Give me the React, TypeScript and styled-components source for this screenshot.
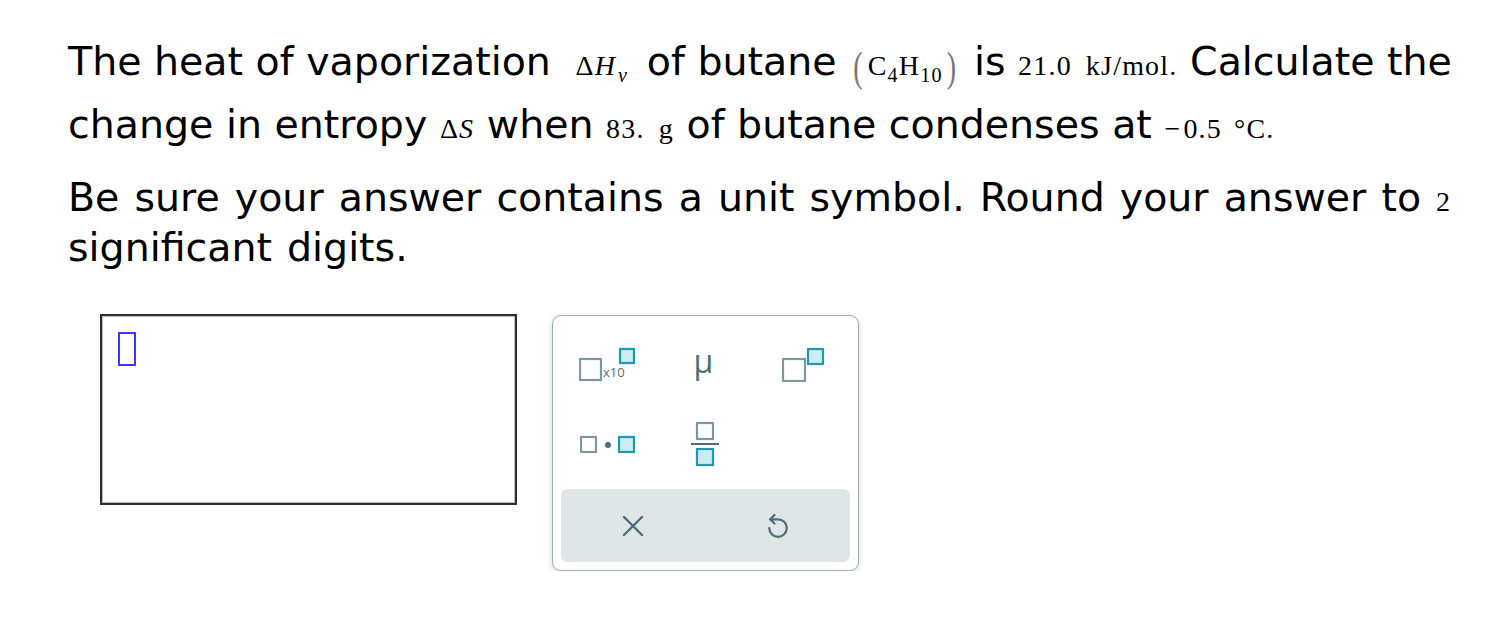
import * as React from 'react';
import styled, { createGlobalStyle } from 'styled-components';

const GlobalStyle = createGlobalStyle`
  html, body {
    margin: 0;
    padding: 0;
    background: #ffffff;
  }
`;

const Page = styled.div`
  padding: 30px 0 0 68px;
  width: 1410px;
  font-family: "DejaVu Sans", Verdana, sans-serif;
  font-size: 39.5px;
  color: #000;
`;

const Paragraph = styled.p<{ $lh: number; $mb: number; $ws?: number }>`
  margin: 0 0 ${p => p.$mb}px 0;
  line-height: ${p => p.$lh}px;
  word-spacing: ${p => p.$ws || 0}px;
`;

const M = styled.span<{ $pad?: number; $padR?: number }>`
  font-family: "Liberation Serif", "Times New Roman", serif;
  font-size: 28px;
  letter-spacing: 1.2px;
  word-spacing: 0;
  line-height: 0;
  padding-left: ${p => p.$pad || 0}px;
  padding-right: ${p => p.$padR || 0}px;
`;

const I = styled.i`
  font-style: italic;
`;

const Sub = styled.sub<{ $ml?: number }>`
  font-size: 0.72em;
  vertical-align: -0.35em;
  line-height: 0;
  margin-left: ${p => p.$ml || 0}px;
`;

const Gap = styled.span<{ $w: number }>`
  display: inline-block;
  width: ${p => p.$w}px;
`;

const Paren = styled.span`
  display: inline-block;
  color: #777;
  transform: scaleY(1.5) translateY(1px);
  line-height: 0;
  margin: 0 4px;
`;

const Work = styled.div`
  display: flex;
  align-items: flex-start;
  gap: 35px;
  margin: 42px 0 0 32px;
`;

const AnswerBox = styled.div`
  width: 397px;
  height: 171px;
  border: 2px solid #2e2e2e;
  box-shadow: inset 0 0 0 1px #bdbdbd;
  padding: 16px 0 0 16px;
`;

const Cursor = styled.div`
  width: 14px;
  height: 30px;
  border: 2px solid #3a3aff;
`;

const Keypad = styled.div`
  margin-top: 1px;
  width: 289px;
  border: 1.5px solid #9bb0b6;
  border-radius: 9px;
  padding: 8px;
  box-shadow: 0 2px 6px rgba(80, 110, 120, 0.25);
  background: #fff;
`;

const KeyGrid = styled.div`
  display: grid;
  grid-template-columns: repeat(3, 1fr);
  grid-auto-rows: 80px;
  margin-bottom: 5px;
`;

const Key = styled.div`
  display: flex;
  align-items: center;
  justify-content: center;
  color: #4e6d78;
`;

const ActionBar = styled.div`
  display: grid;
  grid-template-columns: 1fr 1fr;
  height: 73px;
  background: #dfe6e8;
  border-radius: 7px;
`;

const Mu = styled.span`
  font-family: "Open Sans", "DejaVu Sans", sans-serif;
  font-size: 32px;
  line-height: 1;
  color: #4e6d78;
  margin: 0 4px 6px 0;
`;

const GRAY = '#7f979e';
const CYAN = '#1a9bb1';
const CYAN_FILL = '#cbecf1';

function Box({ x, y, s, on }: { x: number; y: number; s: number; on?: boolean }) {
  return (
    <rect
      x={x + 1}
      y={y + 1}
      width={s - 2}
      height={s - 2}
      fill={on ? CYAN_FILL : '#fff'}
      stroke={on ? CYAN : GRAY}
      strokeWidth={2.2}
    />
  );
}

function SciIcon() {
  return (
    <svg width="60" height="36" viewBox="0 0 60 36">
      <Box x={0} y={12} s={23} />
      <text x={24} y={31} fontSize="13" fontFamily="Open Sans, DejaVu Sans, sans-serif" fill="#4e6d78">x10</text>
      <Box x={40} y={2} s={16} on />
    </svg>
  );
}

function PowIcon() {
  return (
    <svg width="46" height="36" viewBox="0 0 46 36">
      <Box x={3} y={12} s={24} />
      <Box x={28} y={2} s={17} on />
    </svg>
  );
}

function DotIcon() {
  return (
    <svg width="58" height="20" viewBox="0 0 58 20">
      <Box x={0} y={2} s={17} />
      <circle cx={28} cy={11} r={3} fill="#4e6d78" />
      <Box x={38} y={2} s={17} on />
    </svg>
  );
}

function FracIcon() {
  return (
    <svg width="30" height="48" viewBox="0 0 30 48">
      <Box x={6} y={2} s={18} />
      <rect x={1} y={23} width={28} height={2} fill="#4e6d78" />
      <Box x={6} y={28} s={18} on />
    </svg>
  );
}

function ClearIcon() {
  return (
    <svg width="22" height="22" viewBox="0 0 22 22">
      <path d="M2 2 L20 20 M20 2 L2 20" stroke="#4e6d78" strokeWidth="2.4" strokeLinecap="round" />
    </svg>
  );
}

function UndoIcon() {
  return (
    <svg width="30" height="30" viewBox="0 0 24 24" fill="none">
      <path d="M9.2 3.2 L5.8 6.6 L9.2 10" stroke="#4e6d78" strokeWidth="1.8" strokeLinecap="round" strokeLinejoin="round" />
      <path d="M5.8 6.6 H12 A7 7 0 1 1 5 13.6" stroke="#4e6d78" strokeWidth="1.8" strokeLinecap="round" />
    </svg>
  );
}

export default function App() {
  return (
    <>
      <GlobalStyle />
      <Page>
        <Paragraph $lh={63} $mb={16}>
          The heat of vaporization{' '}
          <M $pad={12} $padR={6}>Δ<I>H</I><Sub $ml={2}><I>v</I></Sub></M>{' '}
          of butane{' '}
          <M><Paren>(</Paren>C<Sub>4</Sub>H<Sub>10</Sub><Paren>)</Paren></M>{' '}
          is <M>21.0<Gap $w={14} />kJ/mol.</M> Calculate the change in entropy{' '}
          <M>Δ<I>S</I></M> when <M>83.<Gap $w={14} />g</M> of butane condenses at{' '}
          <M>−<Gap $w={2} />0.5<Gap $w={12} />°C.</M>
        </Paragraph>
        <Paragraph $lh={50} $mb={0} $ws={2.5}>
          Be sure your answer contains a unit symbol. Round your answer to{' '}
          <M>2</M> significant digits.
        </Paragraph>
        <Work>
          <AnswerBox>
            <Cursor />
          </AnswerBox>
          <Keypad>
            <KeyGrid>
              <Key><SciIcon /></Key>
              <Key><Mu>μ</Mu></Key>
              <Key><PowIcon /></Key>
              <Key><DotIcon /></Key>
              <Key><FracIcon /></Key>
              <Key />
            </KeyGrid>
            <ActionBar>
              <Key><ClearIcon /></Key>
              <Key><UndoIcon /></Key>
            </ActionBar>
          </Keypad>
        </Work>
      </Page>
    </>
  );
}
